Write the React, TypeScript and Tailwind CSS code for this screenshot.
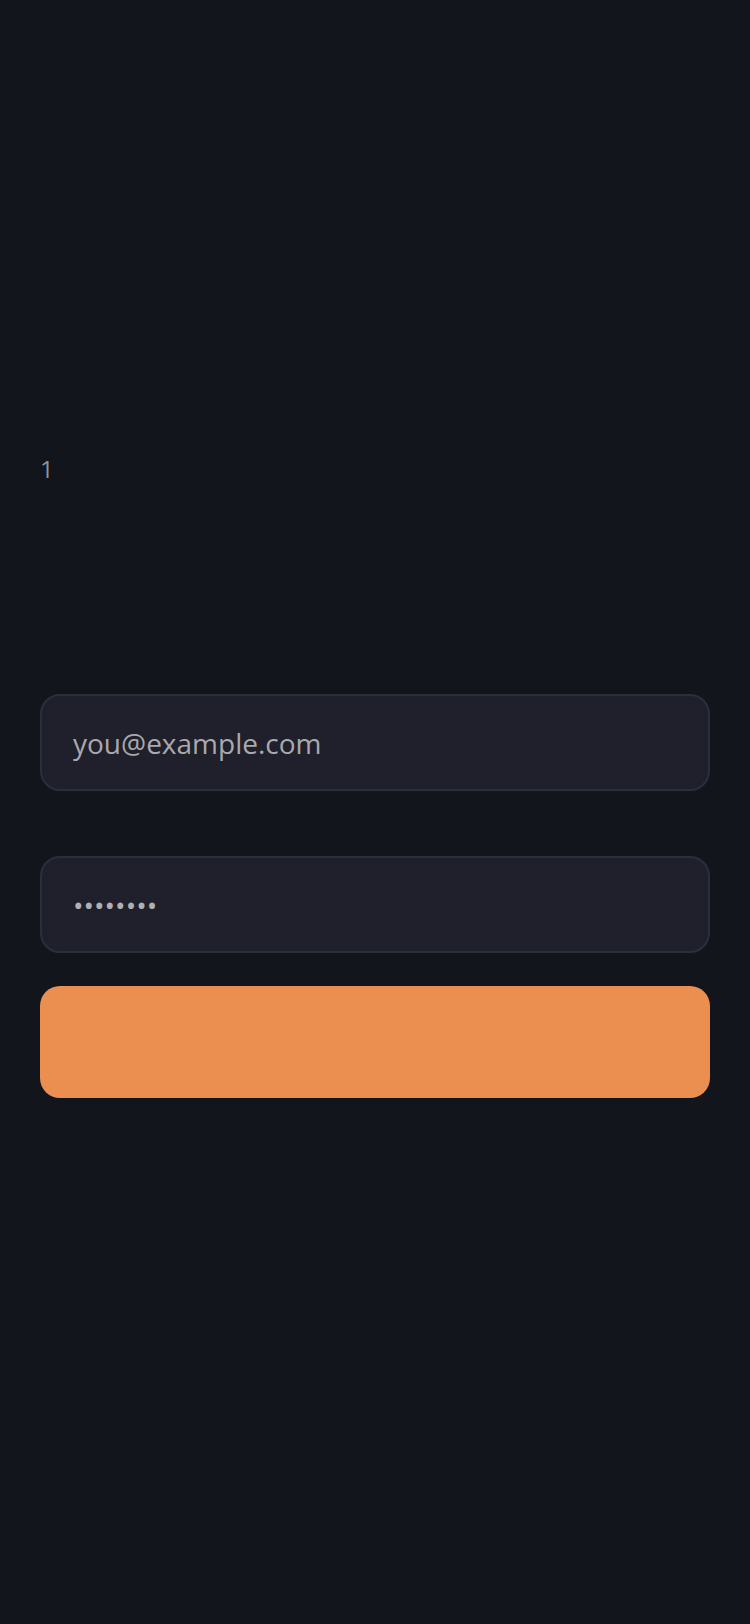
import { useState } from "react";

export default function App() {
  const [email, setEmail] = useState("");
  const [password, setPassword] = useState("");

  return (
    <main
      className="min-h-screen bg-[#12151c] px-10 pt-[453px] pb-20"
      style={{ fontFamily: '"Open Sans", "Noto Sans", sans-serif' }}
    >
      <p className="text-[24px] leading-[32px] text-[#8f939c]">1</p>

      <form
        onSubmit={(e) => {
          e.preventDefault();
        }}
        className="flex flex-col mt-[209px]"
      >
        <input
          type="email"
          placeholder="you@example.com"
          value={email}
          onChange={(e) => setEmail(e.target.value)}
          className="w-full h-[97px] rounded-[20px] border-2 border-[#2c2e3c] bg-[#1f202b] px-[31px] text-[28px] text-[#d4d4d8] placeholder:text-[#a9a9ab] outline-none"
        />

        <input
          type="password"
          placeholder="••••••••"
          value={password}
          onChange={(e) => setPassword(e.target.value)}
          className="w-full h-[97px] mt-[65px] rounded-[20px] border-2 border-[#2c2e3c] bg-[#1f202b] px-[31px] text-[28px] text-[#d4d4d8] placeholder:text-[#b0b0b2] outline-none"
        />

        <button
          type="submit"
          className="w-full h-[112px] mt-[33px] rounded-[20px] bg-[#eb8f50]"
        />
      </form>
    </main>
  );
}
